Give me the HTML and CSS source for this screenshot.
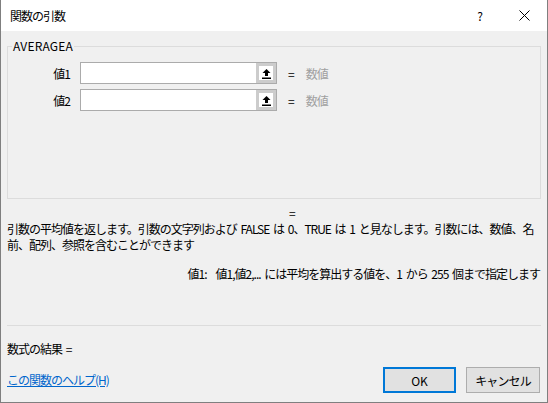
FILE: index.html
```
<!DOCTYPE html>
<html lang="ja">
<head>
<meta charset="utf-8">
<link rel="stylesheet" href="styles.css">
</head>
<body>
<div class="dialog">
  <div class="titlebar">
    <span class="title">関数の引数</span>
    <span class="help">?</span>
    <span class="close"><svg width="11" height="11" viewBox="0 0 11 11"><path d="M0.5 0.5 L10.5 10.5 M10.5 0.5 L0.5 10.5" stroke="#000" stroke-width="1" fill="none"/></svg></span>
  </div>
  <div class="body">
    <div class="group">
      <span class="group-title">AVERAGEA</span>
      <div class="args">
        <span class="arg-label">値1</span>
        <div class="field"><span class="field-text"></span><span class="ref-btn"><svg width="11" height="11" viewBox="0 0 11 11"><path d="M5.5 1 L9.5 5 L7 5 L7 8 L4 8 L4 5 L1.5 5 Z" fill="#000"/><rect x="1" y="9.5" width="9" height="1.5" fill="#000"/></svg></span></div>
        <span class="eq">=</span>
        <span class="hint">数値</span>
        <span class="arg-label">値2</span>
        <div class="field"><span class="field-text"></span><span class="ref-btn"><svg width="11" height="11" viewBox="0 0 11 11"><path d="M5.5 1 L9.5 5 L7 5 L7 8 L4 8 L4 5 L1.5 5 Z" fill="#000"/><rect x="1" y="9.5" width="9" height="1.5" fill="#000"/></svg></span></div>
        <span class="eq">=</span>
        <span class="hint">数値</span>
      </div>
    </div>
    <div class="center-eq">=</div>
    <p class="desc">引数の平均値を返します。引数の文字列および FALSE は 0、TRUE は 1 と見なします。引数には、数値、名<br>前、配列、参照を含むことができます</p>
    <p class="arg-desc"><span class="arg-name">値1:</span>値1,値2,... には平均を算出する値を、1 から 255 個まで指定します</p>
    <div class="sep"></div>
    <p class="result">数式の結果 =</p>
    <div class="footer">
      <a class="help-link" href="#">この関数のヘルプ(H)</a>
      <button class="btn btn-ok">OK</button>
      <button class="btn btn-cancel">キャンセル</button>
    </div>
  </div>
</div>
</body>
</html>
```

FILE: styles.css
```
* { box-sizing: border-box; }
html, body { margin: 0; padding: 0; }
body {
  width: 548px;
  height: 403px;
  overflow: hidden;
  font-family: "Noto Sans CJK JP", sans-serif;
  font-size: 12px;
  letter-spacing: -1px;
  word-spacing: 2px;
  color: #000;
  background: #f0f0f0;
}
.dialog {
  width: 548px;
  height: 403px;
  border: 1px solid #7f7f7f;
  border-top: none;
  background: #f0f0f0;
  display: flex;
  flex-direction: column;
}
.titlebar {
  height: 31px;
  background: #fff;
  display: flex;
  align-items: center;
  padding-left: 9px;
}
.title { flex: 1; font-size: 12px; line-height: 16px; }
.help { width: 12px; text-align: center; margin-right: 33px; font-size: 12px; letter-spacing: 0; }
.close { width: 11px; height: 11px; margin-right: 17px; display: flex; }
.body {
  flex: 1;
  padding: 0 6px;
  display: flex;
  flex-direction: column;
}
.group {
  position: relative;
  margin-top: 15px;
  height: 153px;
  border: 1px solid #dcdcdc;
}
.group-title {
  position: absolute;
  top: -9px;
  left: 4px;
  padding: 0 1px;
  background: #f0f0f0;
  line-height: 16px;
  letter-spacing: 0.2px;
}
.args {
  display: grid;
  grid-template-columns: 62px 207px auto auto;
  grid-auto-rows: 22px;
  row-gap: 5px;
  justify-content: start;
  margin-top: 15px;
  align-items: center;
}
.arg-label { text-align: right; }
.field {
  margin-left: 10px;
  width: 197px;
  height: 22px;
  border: 1px solid #ababab;
  background: #fff;
  display: flex;
}
.field-text { flex: 1; }
.ref-btn {
  width: 20px;
  height: 20px;
  border: 3px solid #cccccc;
  background: #fff;
  display: flex;
  align-items: center;
  justify-content: center;
}
.eq { margin-left: 11px; letter-spacing: 0; }
.hint { margin-left: 11px; color: #a0a0a0; }
.center-eq { height: 14px; line-height: 14px; margin-top: 7px; padding-left: 282px; letter-spacing: 0; }
.desc { margin: 1px 0 0; line-height: 16px; }
.arg-desc { margin: 13px 0 0; line-height: 16px; text-align: right; padding-right: 1px; }
.arg-name { margin-right: 9px; }
.sep { margin-top: 43px; height: 1px; background: #dcdcdc; }
.result { margin: 15px 0 0; line-height: 16px; }
.footer {
  margin-top: 10px;
  display: flex;
  align-items: center;
  gap: 10px;
}
.help-link { flex: 1; color: #0066cc; text-decoration: underline; line-height: 16px; }
.btn {
  width: 74px;
  height: 26px;
  font-family: inherit;
  font-size: 12px;
  letter-spacing: -0.9px;
  background: #e1e1e1;
  border: 1px solid #adadad;
  padding: 0;
  color: #000;
}
.btn-ok { width: 73px; border: 2px solid #0078d7; letter-spacing: 0; }
.btn-cancel { margin-right: 1px; }
```
